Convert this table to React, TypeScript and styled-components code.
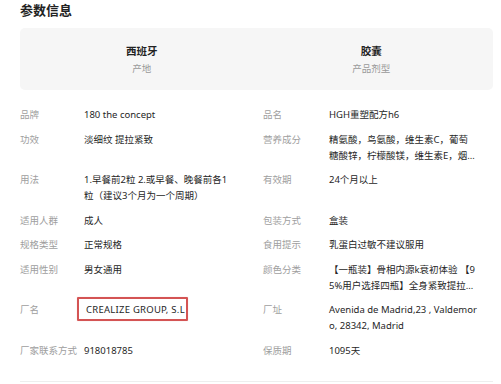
import React from "react";
import styled, { createGlobalStyle } from "styled-components";

const GlobalStyle = createGlobalStyle`
  html, body {
    margin: 0;
    padding: 0;
    background: #ffffff;
  }
  body {
    font-family: "Noto Sans", "Noto Sans CJK SC", sans-serif;
    -webkit-font-smoothing: antialiased;
  }
`;

const Page = styled.div`
  width: 501px;
  height: 384px;
  box-sizing: border-box;
  padding: 0 8px 0 20px;
  overflow: hidden;
  display: flex;
  flex-direction: column;
`;

const Title = styled.h2`
  margin: 0;
  font-size: 13px;
  line-height: 20px;
  font-weight: 700;
  color: #222222;
`;

const SummaryCard = styled.div`
  margin-top: 8px;
  height: 62px;
  box-sizing: border-box;
  padding: 15px 7px 0;
  background: #f6f6f6;
  border-radius: 5px;
  display: grid;
  grid-template-columns: 1fr 1fr;
`;

const SummaryItem = styled.div`
  display: flex;
  flex-direction: column;
  align-items: center;
  gap: 2px;
`;

const SummaryValue = styled.div`
  font-size: 10.5px;
  line-height: 16px;
  font-weight: 700;
  color: #222222;
`;

const SummaryLabel = styled.div`
  font-size: 9.5px;
  line-height: 16px;
  color: #999999;
`;

const Params = styled.div`
  margin-top: 17px;
  display: grid;
  grid-template-columns: 64px 179px 66px 1fr;
  row-gap: 8.5px;
  font-size: 9.5px;
  line-height: 16px;
`;

const Label = styled.div`
  color: #9e9e9e;
  white-space: nowrap;
`;

const Value = styled.div<{ $highlight?: boolean }>`
  color: #262626;
  position: relative;
  ${(p) =>
    p.$highlight &&
    `
    padding-left: 2px;
    letter-spacing: 0.25px;
    &::after {
      content: "";
      position: absolute;
      left: -7px;
      top: -5px;
      width: 111px;
      height: 24px;
      box-sizing: border-box;
      border: 2px solid #d45454;
      border-radius: 1px;
      box-shadow: 0 0 1px rgba(212, 84, 84, 0.4);
    }
  `}
`;

const Line = styled.span`
  display: block;
  white-space: nowrap;
`;

const Divider = styled.div`
  margin-top: 22px;
  height: 1px;
  background: #eeeeee;
`;

type Cell = { label: string; lines: string[]; highlight?: boolean };

const rows: [Cell, Cell][] = [
  [
    { label: "品牌", lines: ["180 the concept"] },
    { label: "品名", lines: ["HGH重塑配方h6"] },
  ],
  [
    { label: "功效", lines: ["淡细纹 提拉紧致"] },
    {
      label: "营养成分",
      lines: ["精氨酸，鸟氨酸，维生素C，葡萄", "糖酸锌，柠檬酸镁，维生素E，烟…"],
    },
  ],
  [
    {
      label: "用法",
      lines: ["1.早餐前2粒 2.或早餐、晚餐前各1", "粒（建议3个月为一个周期）"],
    },
    { label: "有效期", lines: ["24个月以上"] },
  ],
  [
    { label: "适用人群", lines: ["成人"] },
    { label: "包装方式", lines: ["盒装"] },
  ],
  [
    { label: "规格类型", lines: ["正常规格"] },
    { label: "食用提示", lines: ["乳蛋白过敏不建议服用"] },
  ],
  [
    { label: "适用性别", lines: ["男女通用"] },
    {
      label: "颜色分类",
      lines: ["【一瓶装】骨相内源k衰初体验 【9", "5%用户选择四瓶】全身紧致提拉…"],
    },
  ],
  [
    { label: "厂名", lines: ["CREALIZE GROUP, S.L"], highlight: true },
    {
      label: "厂址",
      lines: ["Avenida de Madrid,23 , Valdemor", "o, 28342, Madrid"],
    },
  ],
  [
    { label: "厂家联系方式", lines: ["918018785"] },
    { label: "保质期", lines: ["1095天"] },
  ],
];

const ParamCell: React.FC<{ cell: Cell }> = ({ cell }) => (
  <>
    <Label>{cell.label}</Label>
    <Value $highlight={cell.highlight}>
      {cell.lines.map((l, i) => (
        <Line key={i}>{l}</Line>
      ))}
    </Value>
  </>
);

export default function App() {
  return (
    <>
      <GlobalStyle />
      <Page>
        <Title>参数信息</Title>
        <SummaryCard>
          <SummaryItem>
            <SummaryValue>西班牙</SummaryValue>
            <SummaryLabel>产地</SummaryLabel>
          </SummaryItem>
          <SummaryItem>
            <SummaryValue>胶囊</SummaryValue>
            <SummaryLabel>产品剂型</SummaryLabel>
          </SummaryItem>
        </SummaryCard>
        <Params>
          {rows.map(([l, r], i) => (
            <React.Fragment key={i}>
              <ParamCell cell={l} />
              <ParamCell cell={r} />
            </React.Fragment>
          ))}
        </Params>
        <Divider />
      </Page>
    </>
  );
}
